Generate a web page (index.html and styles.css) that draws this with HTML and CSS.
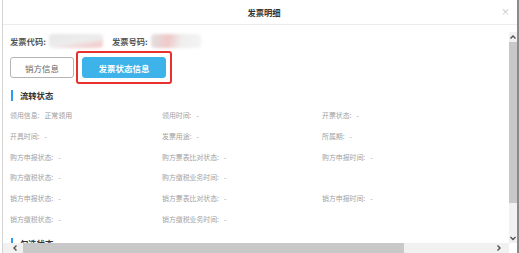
FILE: index.html
```html
<!DOCTYPE html>
<html lang="zh">
<head>
    <meta charset="UTF-8">
    <meta name="viewport" content="width=device-width, initial-scale=1.0">
    <title>发票明细</title>
    <link rel="stylesheet" href="styles.css">
</head>
<body>
    <div class="dialog">
        <header class="dialog-head">
            <h1>发票明细</h1>
            <span class="close">&times;</span>
        </header>
        <div class="dialog-body">
            <div class="content">
                <div class="codes">
                    <span class="code-label">发票代码:</span>
                    <span class="blur blur-a"></span>
                    <span class="code-label">发票号码:</span>
                    <span class="blur blur-b"></span>
                </div>
                <div class="tabs">
                    <button class="tab">销方信息</button>
                    <span class="highlight">
                        <button class="tab active">发票状态信息</button>
                    </span>
                </div>
                <h2 class="section">流转状态</h2>
                <div class="info">
                    <div>领用信息:<span class="val">正常领用</span></div>
                    <div>领用时间:<span class="val">-</span></div>
                    <div>开票状态:<span class="val">-</span></div>

                    <div>开具时间:<span class="val">-</span></div>
                    <div>发票用途:<span class="val">-</span></div>
                    <div>所属期:<span class="val">-</span></div>

                    <div>购方申报状态:<span class="val">-</span></div>
                    <div>购方票表比对状态:<span class="val">-</span></div>
                    <div>购方申报时间:<span class="val">-</span></div>

                    <div>购方缴税状态:<span class="val">-</span></div>
                    <div>购方缴税业务时间:<span class="val">-</span></div>
                    <div></div>

                    <div>销方申报状态:<span class="val">-</span></div>
                    <div>销方票表比对状态:<span class="val">-</span></div>
                    <div>销方申报时间:<span class="val">-</span></div>

                    <div>销方缴税状态:<span class="val">-</span></div>
                    <div>销方缴税业务时间:<span class="val">-</span></div>
                    <div></div>
                </div>
                <h2 class="section">勾选状态</h2>
            </div>
            <div class="vscroll">
                <svg class="arrow" width="8" height="10" viewBox="0 0 8 10"><path d="M1.5 6.5 L4 4 L6.5 6.5" fill="none" stroke="#505050" stroke-width="1.4"/></svg>
                <span class="vthumb"></span>
                <span class="vtrack"></span>
                <svg class="arrow" width="8" height="10" viewBox="0 0 8 10"><path d="M1.5 4 L4 6.5 L6.5 4" fill="none" stroke="#505050" stroke-width="1.4"/></svg>
            </div>
            <div class="hscroll">
                <svg class="arrow" width="8" height="10" viewBox="0 0 8 10"><path d="M5.5 2.5 L3 5 L5.5 7.5" fill="none" stroke="#505050" stroke-width="1.4"/></svg>
                <span class="htrack"><span class="hthumb"></span></span>
                <svg class="arrow" width="8" height="10" viewBox="0 0 8 10"><path d="M2.5 2.5 L5 5 L2.5 7.5" fill="none" stroke="#505050" stroke-width="1.4"/></svg>
            </div>
            <div class="corner"></div>
        </div>
    </div>
</body>
</html>
```

FILE: styles.css
```css
body {
    margin: 0;
    background: #fff;
    font-family: "Noto Sans CJK SC", "Noto Sans", sans-serif;
    color: #333;
    overflow: hidden;
}
.dialog {
    margin-left: 2px;
    width: 514px;
    height: 253px;
    border-left: 1px solid #d4d4d4;
    border-right: 2px solid #8a8a8a;
    display: flex;
    flex-direction: column;
}
.dialog-head {
    height: 24px;
    flex-shrink: 0;
    border-bottom: 1px solid #ececec;
    display: flex;
    align-items: center;
    justify-content: center;
    position: relative;
}
.dialog-head h1 {
    margin: 0 0 0 8px;
    font-size: 8.3px;
    font-weight: bold;
    color: #333;
}
.close {
    position: absolute;
    right: 7px;
    top: 5px;
    font-size: 9px;
    color: #bbb;
}
.dialog-body {
    flex: 1;
    min-height: 0;
    display: grid;
    grid-template-columns: 1fr 8px;
    grid-template-rows: 1fr 10px;
}
.content {
    overflow: hidden;
    padding: 8px 0 0 7px;
}
.codes {
    display: flex;
    align-items: center;
    height: 16px;
}
.code-label {
    font-size: 8.3px;
    font-weight: bold;
    color: #555;
}
.blur {
    display: inline-block;
    height: 14px;
    margin: 0 9px 0 3px;
    border-radius: 4px;
    filter: blur(1.5px);
}
.blur-a {
    width: 54px;
    background: linear-gradient(170deg, #e6e6e6 0%, #ededed 55%, #f3caca 85%, #f7dede 100%);
}
.blur-b {
    width: 50px;
    background: linear-gradient(100deg, #e2e2e2 0%, #f0c8c8 35%, #eeeeee 60%, #f4f4f4 100%);
}
.tabs {
    display: flex;
    align-items: center;
    margin-top: 8px;
}
.tab {
    height: 21px;
    width: 64px;
    padding: 0;
    border: 1px solid #b4b4b4;
    border-radius: 3px;
    background: #fff;
    color: #666;
    font-family: inherit;
    font-size: 8.5px;
}
.highlight {
    display: flex;
    margin: -6px 0 -6px 2px;
    padding: 4px;
    border: 2px solid #e8312c;
    border-radius: 3px;
}
.tab.active {
    width: 84px;
    border-color: #3db3ea;
    background: #3db3ea;
    color: #fff;
    font-weight: bold;
}
.section {
    margin: 12px 0 4px 1px;
    padding-left: 7px;
    border-left: 2px solid #2f9bef;
    height: 11px;
    line-height: 11px;
    font-size: 8.3px;
    font-weight: bold;
    color: #333;
}
.info {
    display: grid;
    grid-template-columns: 152px 160px 1fr;
    grid-auto-rows: 20.7px;
    align-items: center;
    font-size: 6.9px;
    color: #a2a2a2;
}
.val {
    margin-left: 5px;
    color: #999;
}
.info + .section {
    margin-top: 9px;
}
.vscroll {
    margin-top: 7px;
    background: #f1f1f1;
    display: flex;
    flex-direction: column;
    align-items: center;
}
.vscroll .arrow {
    display: block;
    flex-shrink: 0;
}
.vthumb {
    width: 8px;
    height: 161px;
    background: #c8c8c8;
}
.vtrack {
    flex: 1;
}
.hscroll {
    background: #f1f1f1;
    display: flex;
    align-items: center;
    padding: 0 6px 0 8px;
}
.hscroll .arrow {
    display: block;
    flex-shrink: 0;
}
.htrack {
    flex: 1;
    height: 10px;
    margin: 0 8px 0 4px;
}
.hthumb {
    display: block;
    width: 381px;
    height: 10px;
    background: #c8c8c8;
}
.corner {
    background: #fff;
}
```
